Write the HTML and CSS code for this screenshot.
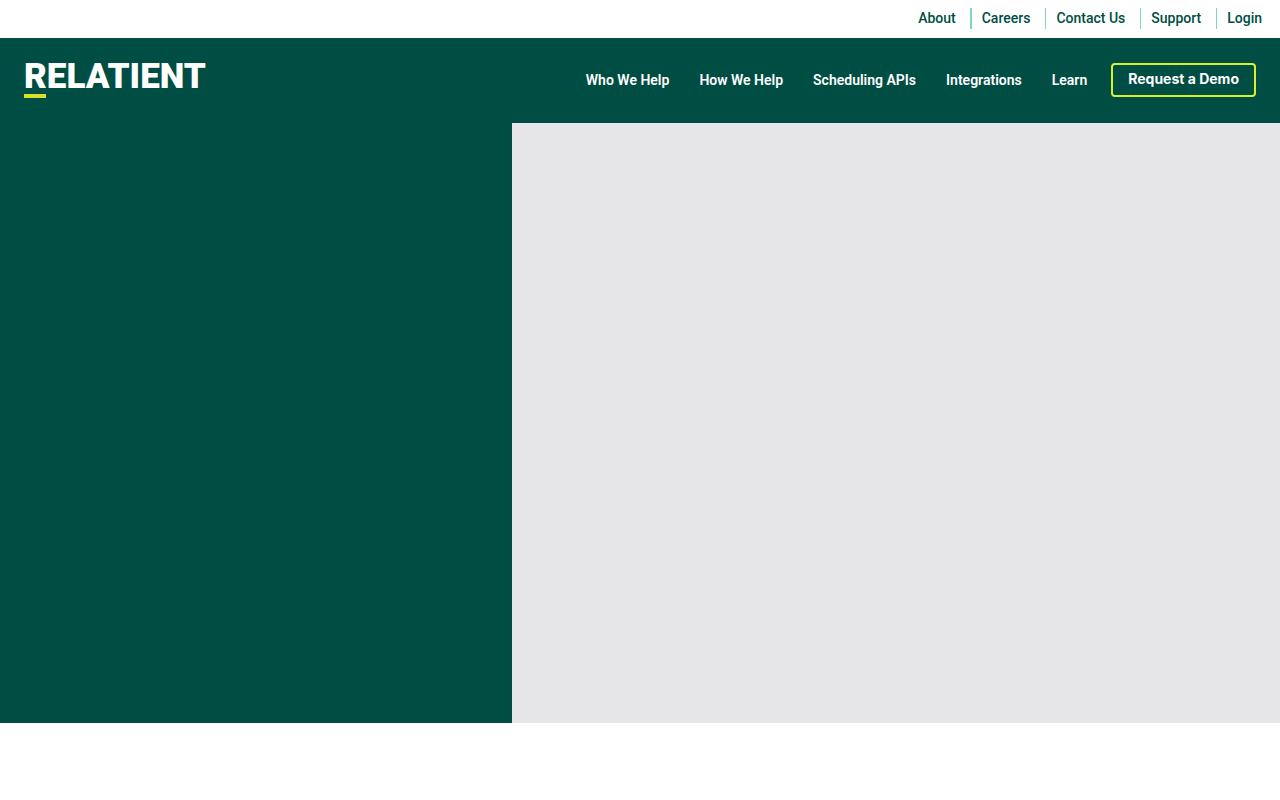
FILE: index.html
```html
<!DOCTYPE html>
<html lang="en">
<head>
<meta charset="utf-8">
<meta name="viewport" content="width=device-width, initial-scale=1">
<title>Relatient</title>
<link rel="stylesheet" href="styles.css">
</head>
<body>
<nav class="topbar" aria-label="Utility">
  <a class="topbar-link" href="#">About</a>
  <a class="topbar-link" href="#">Careers</a>
  <a class="topbar-link" href="#">Contact Us</a>
  <a class="topbar-link" href="#">Support</a>
  <a class="topbar-link" href="#">Login</a>
</nav>
<header class="header">
  <a class="logo" href="#">RELATIENT</a>
  <nav class="menu" aria-label="Main">
    <a class="menu-link" href="#">Who We Help</a>
    <a class="menu-link" href="#">How We Help</a>
    <a class="menu-link" href="#">Scheduling APIs</a>
    <a class="menu-link" href="#">Integrations</a>
    <a class="menu-link" href="#">Learn</a>
  </nav>
  <a class="demo" href="#">Request a Demo</a>
</header>
<main class="hero">
  <section class="hero-copy"></section>
  <section class="hero-media"></section>
</main>
</body>
</html>
```
FILE: styles.css
```css
* { box-sizing: border-box; }

body {
  margin: 0;
  background: #fff;
  font-family: Roboto, "Liberation Sans", sans-serif;
}

a { text-decoration: none; white-space: nowrap; }

.topbar {
  display: flex;
  justify-content: flex-end;
  padding: 8px 8px 9px;
}

.topbar-link {
  padding: 0 15px 0 10px;
  border-right: 1px solid #7fd9b9;
  color: #004d43;
  font-size: 14px;
  font-weight: 500;
  line-height: 21px;
}

.topbar-link:first-child {
  padding-right: 14px;
  border-right-width: 2px;
}

.topbar-link:last-child {
  padding-right: 10px;
  border-right: 0;
}

.header {
  display: flex;
  align-items: center;
  padding: 25px 24px 26px;
  background: #004d43;
}

.logo {
  position: relative;
  color: #fff;
  font-size: 35px;
  font-weight: 900;
  line-height: 28px;
  padding-bottom: 6px;
}

.logo::after {
  content: "";
  position: absolute;
  left: 0;
  bottom: -1px;
  width: 22px;
  height: 4px;
  background: #d7e026;
}

.menu {
  display: flex;
  gap: 30px;
  margin-left: auto;
}

.menu-link {
  color: #fff;
  font-size: 14px;
  font-weight: 600;
  line-height: 20px;
}

.demo {
  margin-left: 24px;
  padding: 4px 15px 6px;
  border: 2px solid #d7ef2f;
  border-radius: 4px;
  color: #fff;
  font-family: Inter, "Liberation Sans", sans-serif;
  font-size: 14px;
  font-weight: 700;
  line-height: 20px;
}

.hero {
  display: grid;
  grid-template-columns: 2fr 3fr;
  min-height: 600px;
}

.hero-copy { background: #004d43; }

.hero-media { background: #e6e6e8; }
```
